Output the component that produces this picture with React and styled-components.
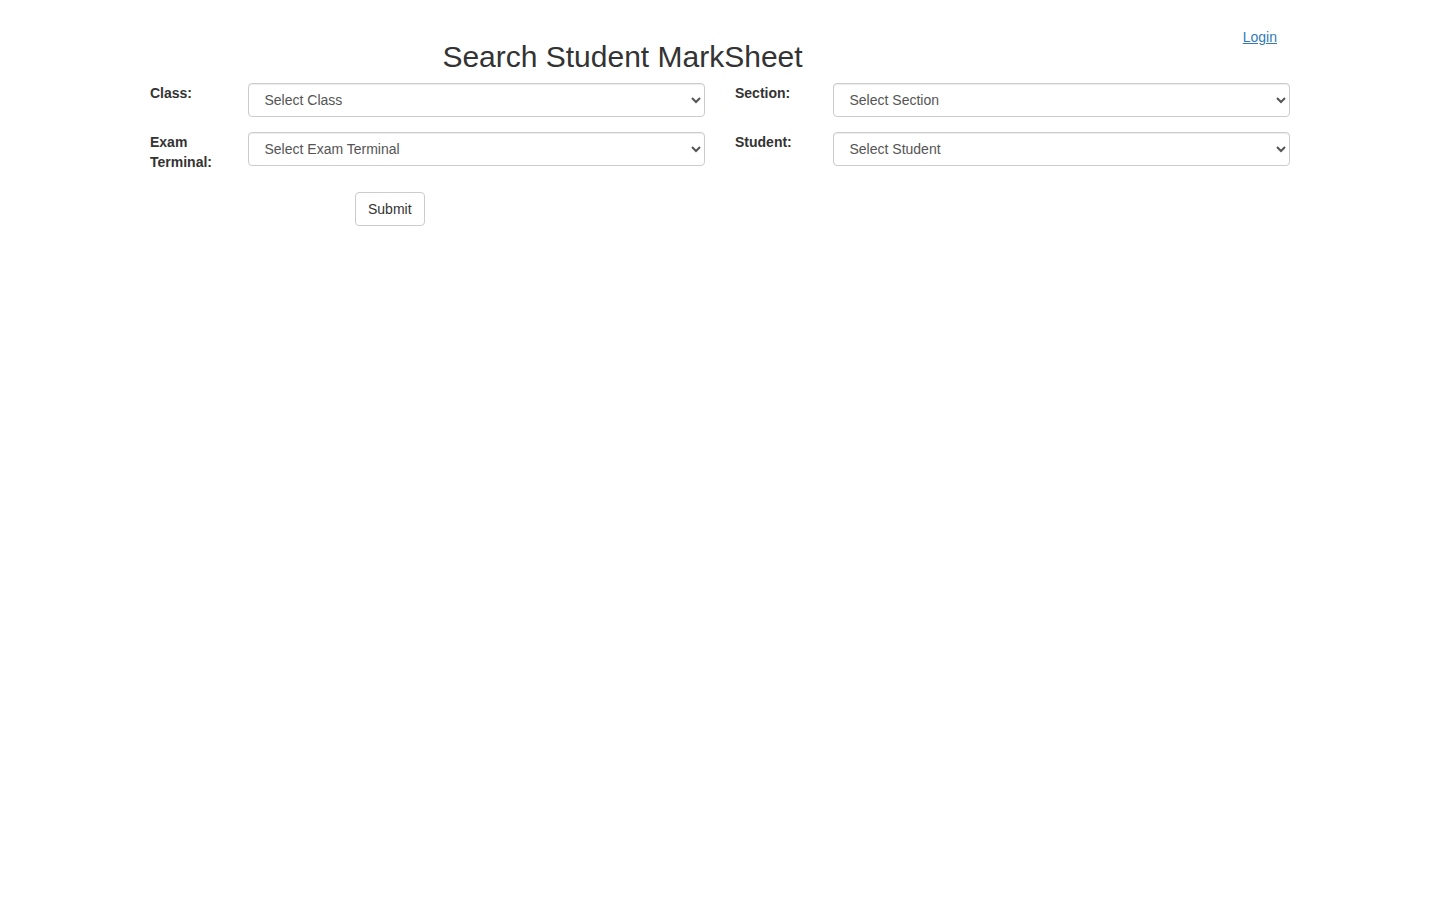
import React from 'react';
import styled, { createGlobalStyle } from 'styled-components';

const GlobalStyle = createGlobalStyle`
  html, body {
    margin: 0;
    padding: 0;
    background: #fff;
  }
  body {
    font-family: "Liberation Sans", Arial, Helvetica, sans-serif;
    font-size: 14px;
    line-height: 1.42857143;
    color: #333;
  }
  * {
    box-sizing: border-box;
  }
`;

// Page container (bootstrap-like 1170 container)
const Container = styled.div`
  width: 1170px;
  margin: 0 auto;
  padding: 20px 15px 0;
`;

const Header = styled.div`
  display: grid;
  grid-template-columns: 1fr 165px;
  column-gap: 30px;
  align-items: start;
`;

const Title = styled.h2`
  margin: 20px 0 10px;
  font-size: 30px;
  font-weight: 500;
  line-height: 1.1;
  text-align: center;
  color: #333;
`;

const LoginLink = styled.a`
  justify-self: end;
  margin-top: 7px;
  padding-right: 13px;
  color: #337ab7;
  text-decoration: underline;
  cursor: pointer;
`;

const FormGrid = styled.form`
  display: grid;
  grid-template-columns: 67.5px 1fr 67.5px 1fr;
  column-gap: 30px;
  row-gap: 15px;
  align-items: start;
`;

const Label = styled.label`
  font-weight: bold;
  color: #333;
`;

const Select = styled.select`
  display: block;
  width: 100%;
  height: 34px;
  padding: 6px 12px;
  font-family: inherit;
  font-size: 14px;
  line-height: 1.42857143;
  color: #555;
  background-color: #fff;
  border: 1px solid #ccc;
  border-radius: 4px;
  box-shadow: inset 0 1px 1px rgba(0, 0, 0, 0.075);
`;

const Actions = styled.div`
  margin-top: 20px;
  padding-left: 205px;
`;

const Button = styled.button`
  display: inline-block;
  padding: 6px 12px;
  font-family: inherit;
  font-size: 14px;
  line-height: 1.42857143;
  color: #333;
  background: #fff;
  border: 1px solid #ccc;
  border-radius: 4px;
  cursor: pointer;
`;

const fields = [
  { id: 'class', label: 'Class:', placeholder: 'Select Class' },
  { id: 'section', label: 'Section:', placeholder: 'Select Section' },
  { id: 'exam', label: 'Exam Terminal:', placeholder: 'Select Exam Terminal' },
  { id: 'student', label: 'Student:', placeholder: 'Select Student' },
];

const App = () => {
  return (
    <>
      <GlobalStyle />
      <Container>
        <Header>
          <Title>Search Student MarkSheet</Title>
          <LoginLink href="#">Login</LoginLink>
        </Header>
        <FormGrid onSubmit={(e) => e.preventDefault()}>
          {fields.map((f) => (
            <React.Fragment key={f.id}>
              <Label htmlFor={f.id}>{f.label}</Label>
              <Select id={f.id} defaultValue="">
                <option value="">{f.placeholder}</option>
              </Select>
            </React.Fragment>
          ))}
        </FormGrid>
        <Actions>
          <Button type="button">Submit</Button>
        </Actions>
      </Container>
    </>
  );
};

export default App;
